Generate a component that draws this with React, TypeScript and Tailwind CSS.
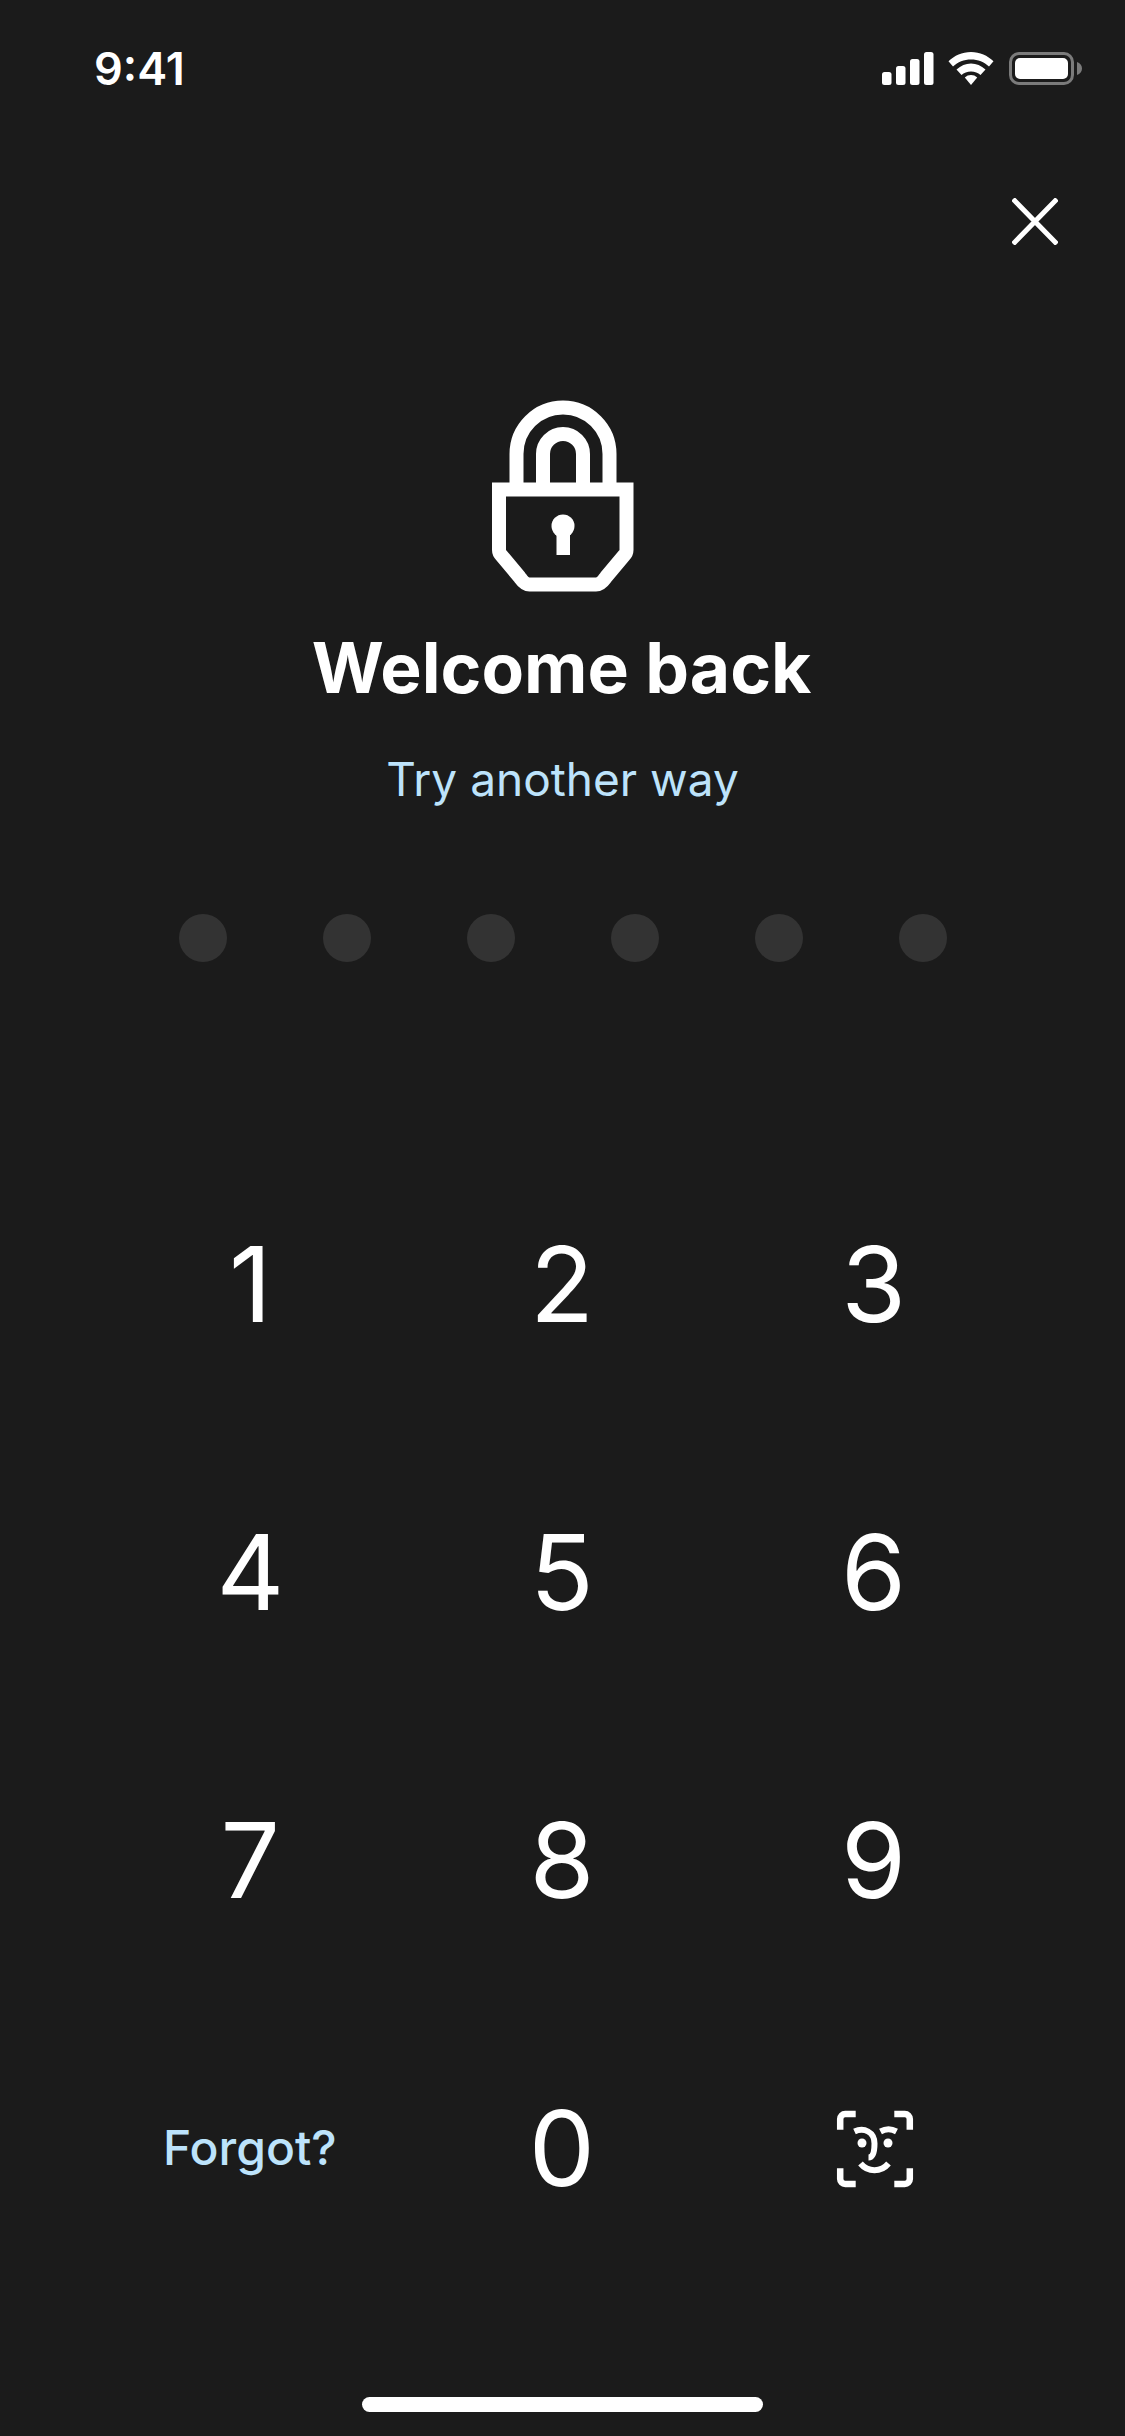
/**
 * Passcode unlock screen.
 */

const digits = ['1', '2', '3', '4', '5', '6', '7', '8', '9']
const dots = [0, 1, 2, 3, 4, 5]

function StatusIcons() {
  return (
    <div className="flex items-center">
      <svg width="52" height="33" viewBox="0 0 52 33" fill="#fff" className="block">
        <rect x="0" y="20" width="9.5" height="13" rx="2.5" />
        <rect x="14" y="14" width="9.5" height="19" rx="2.5" />
        <rect x="28" y="7" width="9.5" height="26" rx="2.5" />
        <rect x="42" y="0" width="9.5" height="33" rx="2.5" />
      </svg>
      <svg width="46" height="33" viewBox="0 0 46 33" fill="#fff" className="ml-[14px] block">
        <path d="M23 0C14 0 6.500 3.500 0.500 9.300L5 14.500C9.800 9.900 16 7.500 23 7.500S36.200 9.900 41 14.500L45.500 9.300C39.500 3.500 32 0 23 0Z" />
        <path d="M23 11.500C17.500 11.500 13 13.500 8.500 17.500L13.500 23C16 20.700 19.200 19.500 23 19.500S30 20.700 32.500 23L37.500 17.500C33 13.500 28.500 11.500 23 11.500Z" />
        <path d="M23 23C20.800 23 18.500 23.800 16.800 25.500L23 33L29.200 25.500C27.500 23.800 25.200 23 23 23Z" />
      </svg>
      <div className="ml-[15px] flex h-[33px] w-[65px] items-center rounded-[10px] border-[3px] border-[#7b7b7b] p-[3px]">
        <div className="h-full w-full rounded-[5px] bg-white" />
      </div>
      <svg width="5" height="13" viewBox="0 0 5 13" fill="#7b7b7b" className="ml-[3px] block">
        <path d="M0 0C3 1 5 3.500 5 6.500S3 12 0 13Z" />
      </svg>
    </div>
  )
}

function LockIcon() {
  return (
    <svg width="210" height="230" viewBox="0 0 210 230" fill="none" className="ml-[5px] block">
      <g stroke="#fff" strokeWidth="14">
        <path d="M56.500 103V74A46.500 46.500 0 0 1 149.500 74V103" />
        <path d="M83 103V74A20 20 0 0 1 123 74V103" />
        <path
          d="M39 109.500H166.500V170C166.500 172 165.500 174 164 175.500L146 197C144 199.500 141.500 204.500 136 204.500H69.500C64 204.500 61.500 199.500 59.500 197L41.500 175.500C40 174 39 172 39 170Z"
          strokeLinejoin="miter"
        />
      </g>
      <circle cx="103" cy="146" r="11.500" fill="#fff" />
      <rect x="96.500" y="150" width="13.500" height="25" fill="#fff" />
    </svg>
  )
}

function FaceIdIcon() {
  return (
    <svg width="150" height="130" viewBox="0 0 150 130" fill="none" stroke="#fff" strokeWidth="6.500" className="ml-[4px] block">
      <path d="M40.200 48.700V38A5 5 0 0 1 45.200 33H55.700" />
      <path d="M94.300 33H104.800A5 5 0 0 1 109.800 38V48.700" />
      <path d="M40.200 87.300V98A5 5 0 0 0 45.200 103H55.700" />
      <path d="M94.300 103H104.800A5 5 0 0 0 109.800 98V87.300" />
      <g strokeWidth="6">
        <path d="M54.500 50.500C64 46 74.500 51 74.500 62.500C74.500 70 73 76.500 68.500 76.500" />
        <path d="M80.500 50.500C85.500 47.800 91.500 47.800 96.500 50.500" />
        <path d="M60.500 82.500C68 91.500 81 91.500 88.500 82.500" />
      </g>
      <circle cx="62" cy="62" r="4.500" fill="#fff" stroke="none" />
      <circle cx="88" cy="62" r="4.500" fill="#fff" stroke="none" />
    </svg>
  )
}

function Key({ label }: { label: string }) {
  return (
    <button type="button" className="flex h-[288px] items-center justify-center pl-[1px] text-[105px] leading-none font-normal text-white">
      {label}
    </button>
  )
}

export default function App() {
  return (
    <div className="flex min-h-[2436px] w-[1125px] flex-col bg-[#1b1b1b] font-['Inter',sans-serif] text-white">
      <div className="flex h-[137px] items-start justify-between pt-[52px] pr-[43px] pl-[94px]">
        <span className="text-[45px] leading-[34px] font-semibold">9:41</span>
        <StatusIcons />
      </div>

      <div className="flex justify-end pr-[67px]">
        <button type="button" aria-label="Close" className="mt-[61px] block">
          <svg width="46" height="47" viewBox="0 0 46 47" stroke="#fff" strokeWidth="5" className="block">
            <path d="M1 1L45 46M45 1L1 46" />
          </svg>
        </button>
      </div>

      <div className="mt-[135px] flex flex-col items-center">
        <LockIcon />
        <h1 className="mt-[20px] pr-[2px] text-[69.500px] leading-[76px] font-bold">Welcome back</h1>
        <p className="mt-[46px] text-[46px] leading-[54px] font-normal text-[#bde3fb]">Try another way</p>
      </div>

      <div className="mt-[108px] flex justify-between pr-[178px] pl-[179px]">
        {dots.map((dot) => (
          <div key={dot} className="h-[48px] w-[48px] rounded-full bg-[#333333]" />
        ))}
      </div>

      <div className="mt-[177px] ml-[94px] grid w-[935px] grid-cols-3">
        {digits.map((digit) => (
          <Key key={digit} label={digit} />
        ))}
        <button type="button" className="flex h-[288px] items-center justify-center pt-[2px] text-[48px] leading-none font-medium text-[#bde3fb]">
          Forgot?
        </button>
        <Key label="0" />
        <div className="flex h-[288px] items-center justify-center pb-[3px]">
          <FaceIdIcon />
        </div>
      </div>

      <div className="mx-auto mt-[106px] h-[15px] w-[401px] rounded-full bg-white" />
    </div>
  )
}
